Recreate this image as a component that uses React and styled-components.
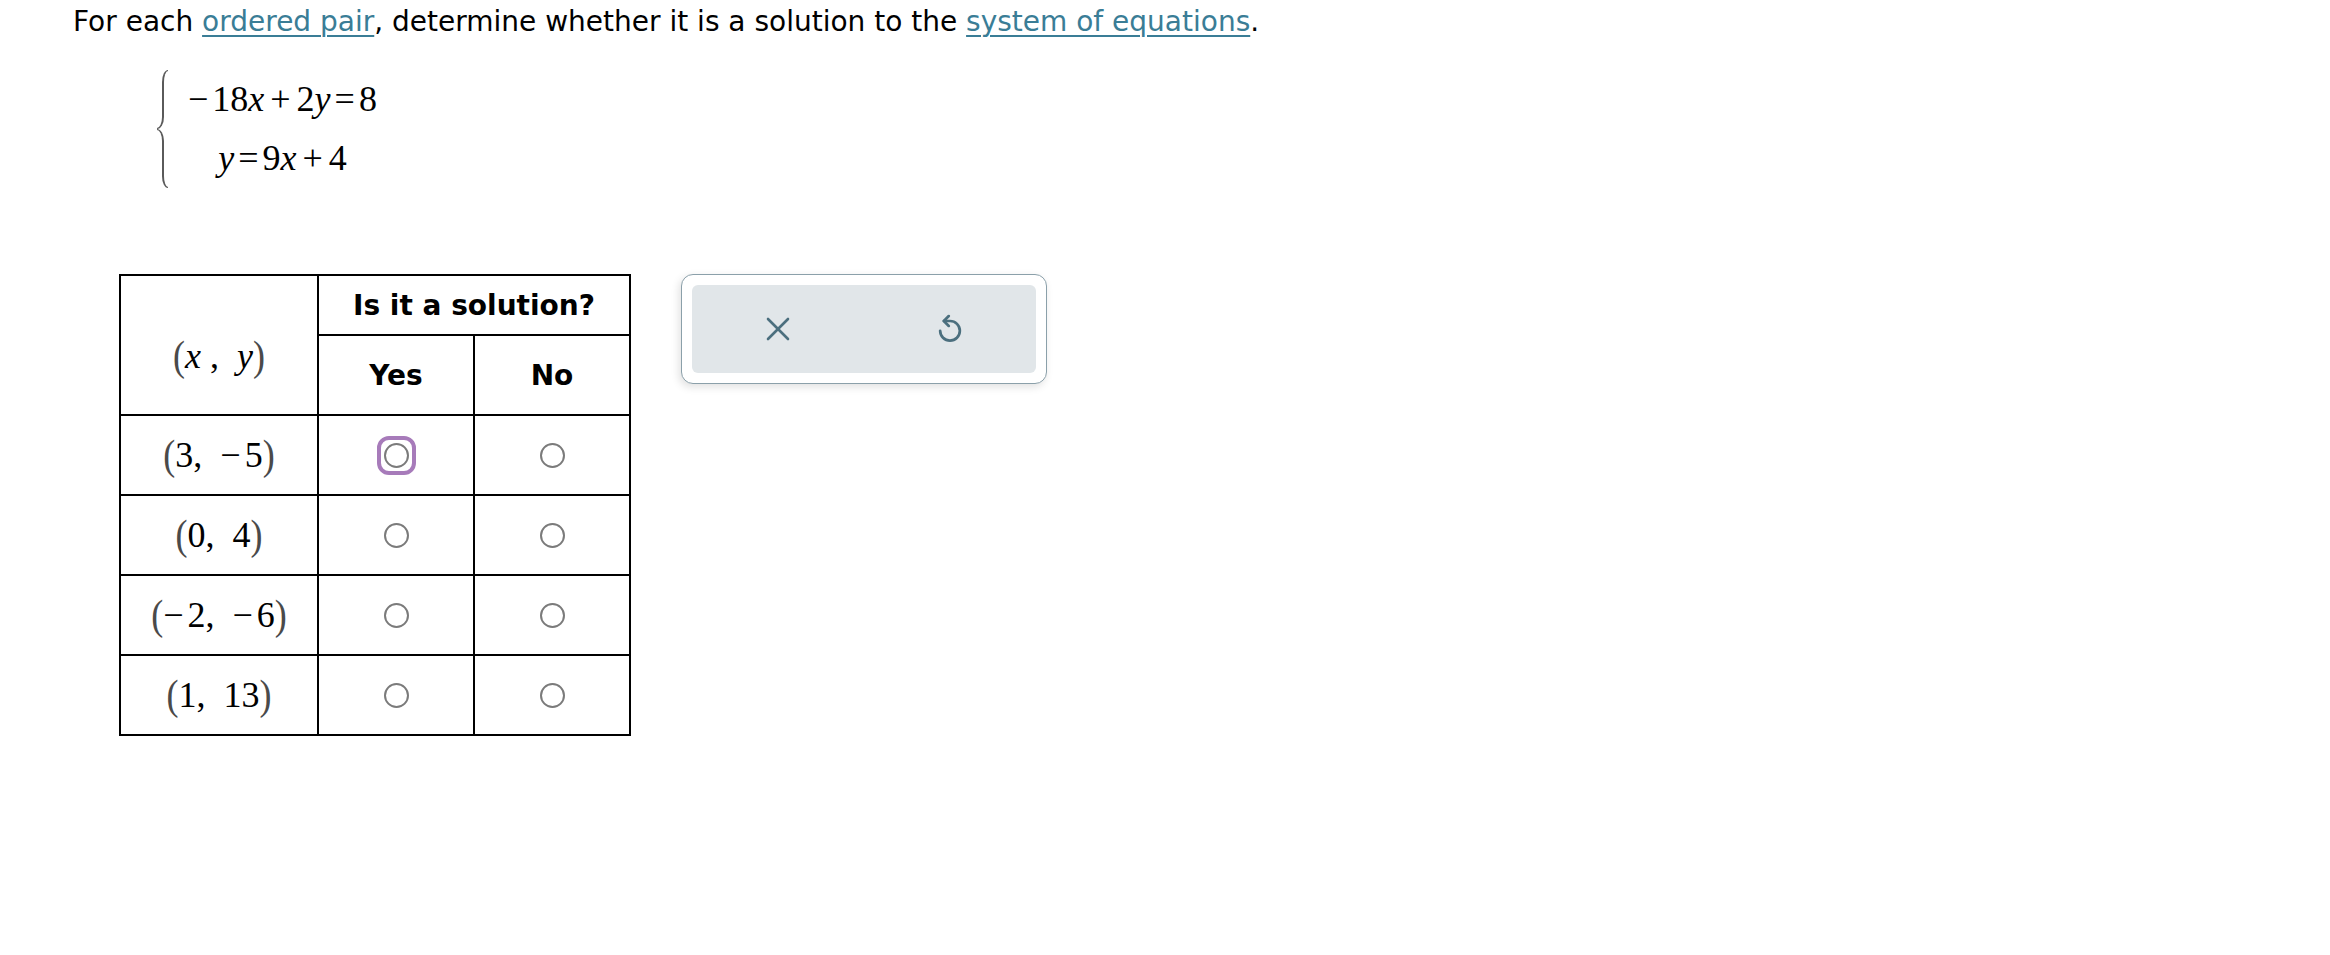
import React from "react";
import styled, { createGlobalStyle } from "styled-components";

const Global = createGlobalStyle`
  html, body {
    margin: 0;
    background: #ffffff;
  }
  body {
    font-family: "DejaVu Sans", Verdana, sans-serif;
    color: #000;
  }
`;

const Page = styled.div`
  padding: 3px 0 40px 73px;
`;

const Prompt = styled.p`
  margin: 0;
  font-size: 28px;
  line-height: 38px;
`;

const TermLink = styled.a`
  color: #3a7d96;
  text-decoration: underline;
  text-decoration-thickness: 2px;
  text-underline-offset: 4px;
  cursor: pointer;
`;

const System = styled.div`
  display: flex;
  align-items: stretch;
  gap: 20px;
  height: 118px;
  margin: 29px 0 0 84px;
`;

const Brace = styled.div`
  width: 11px;
  display: flex;
  flex-direction: column;
`;

const BracePart = styled.div`
  flex: 1;
  box-sizing: border-box;
  border-color: #5a5a5a;
  border-style: solid;
  border-width: 0;
  ${(p) =>
    p.$pos === "top" &&
    `margin-left: 5px; border-left-width: 2px; border-top-width: 1.5px; border-top-left-radius: 6px 12px;`}
  ${(p) =>
    p.$pos === "upper" &&
    `width: 7px; border-right-width: 2px; border-bottom-width: 1.5px; border-bottom-right-radius: 7px 12px;`}
  ${(p) =>
    p.$pos === "lower" &&
    `width: 7px; border-right-width: 2px; border-top-width: 1.5px; border-top-right-radius: 7px 12px;`}
  ${(p) =>
    p.$pos === "bottom" &&
    `margin-left: 5px; border-left-width: 2px; border-bottom-width: 1.5px; border-bottom-left-radius: 6px 12px;`}
`;

const Equations = styled.div`
  display: flex;
  flex-direction: column;
  align-items: center;
  font-family: "Liberation Serif", "Times New Roman", serif;
  font-size: 36px;
  line-height: 59px;
`;

const Line = styled.div`
  white-space: nowrap;
`;

const V = styled.i`
  font-style: italic;
`;

const Op = styled.span`
  margin: 0 ${(p) => p.$gap || 6}px;
`;

const Neg = styled.span`
  margin-right: 4px;
`;

const Workspace = styled.div`
  display: flex;
  align-items: flex-start;
  gap: 50px;
  margin: 86px 0 0 46px;
`;

const Grid = styled.table`
  border-collapse: collapse;
  table-layout: fixed;
`;

const Cell = styled.td`
  border: 2px solid #000;
  padding: 0;
  text-align: center;
  vertical-align: middle;
  width: ${(p) => p.$w || "auto"};
  height: ${(p) => p.$h || 78}px;
`;

const HeadCell = styled(Cell).attrs({ as: "th" })`
  font-weight: bold;
  font-size: 28px;
`;

const PairHead = styled(Cell).attrs({ as: "th" })`
  font-weight: normal;
  padding-top: 22px;
`;

const MathText = styled.span`
  font-family: "Liberation Serif", "Times New Roman", serif;
  font-size: 36px;
  white-space: nowrap;
`;

const Paren = styled.span`
  display: inline-block;
  color: #4a4a4a;
  transform: scaleY(1.2);
`;

const Radio = styled.span`
  display: inline-block;
  box-sizing: border-box;
  width: 25px;
  height: 25px;
  border: 2px solid #7b7b7b;
  border-radius: 50%;
  background: #fff;
  vertical-align: middle;
`;

const FocusRing = styled.span`
  display: inline-flex;
  padding: 3px;
  border: 4px solid #a77bba;
  border-radius: 12px;
  vertical-align: middle;
`;

const Tools = styled.div`
  box-sizing: border-box;
  width: 366px;
  height: 110px;
  padding: 10px;
  border: 1.5px solid #8ba0aa;
  border-radius: 12px;
  background: #fff;
  box-shadow: -2px 3px 8px rgba(0, 0, 0, 0.12);
`;

const ToolPanel = styled.div`
  height: 100%;
  display: grid;
  grid-template-columns: 1fr 1fr;
  background: #e1e6e9;
  border-radius: 6px;
`;

const ToolButton = styled.button`
  border: none;
  background: transparent;
  display: flex;
  align-items: center;
  justify-content: center;
  color: #4b6f7e;
  cursor: pointer;
  padding: 0;
`;

const Pair = ({ children }) => (
  <MathText>
    <Paren>(</Paren>
    {children}
    <Paren>)</Paren>
  </MathText>
);

const rows = [
  { key: "a", content: <>3,&nbsp; <Neg>−</Neg>5</>, focused: true },
  { key: "b", content: <>0,&nbsp; 4</> },
  { key: "c", content: <><Neg>−</Neg>2,&nbsp; <Neg>−</Neg>6</> },
  { key: "d", content: <>1,&nbsp; 13</> },
];

function CloseIcon() {
  return (
    <svg width="26" height="26" viewBox="0 0 26 26" fill="none" stroke="currentColor" strokeWidth="2.6" strokeLinecap="round">
      <path d="M3 3 L23 23" />
      <path d="M23 3 L3 23" />
    </svg>
  );
}

function UndoIcon() {
  return (
    <svg width="30" height="32" viewBox="0 0 24 26" fill="none" stroke="currentColor" strokeWidth="2.2" strokeLinecap="round" strokeLinejoin="round">
      <path d="M7 6.5 H12 A8 8 0 1 1 4 14.5" />
      <path d="M11 2.5 L7 6.5 L11 10.5" />
    </svg>
  );
}

export default function App() {
  return (
    <Page>
      <Global />
      <Prompt>
        For each <TermLink>ordered pair</TermLink>, determine whether it is a solution to the{" "}
        <TermLink>system of equations</TermLink>.
      </Prompt>

      <System>
        <Brace>
          <BracePart $pos="top" />
          <BracePart $pos="upper" />
          <BracePart $pos="lower" />
          <BracePart $pos="bottom" />
        </Brace>
        <Equations>
          <Line>
            <Neg>−</Neg>18<V>x</V>
            <Op>+</Op>2<V>y</V>
            <Op $gap={4}>=</Op>8
          </Line>
          <Line>
            <V>y</V>
            <Op $gap={4}>=</Op>9<V>x</V>
            <Op>+</Op>4
          </Line>
        </Equations>
      </System>

      <Workspace>
        <Grid>
          <thead>
            <tr>
              <PairHead rowSpan={2} $w="196px" $h={58}>
                <Pair>
                  <V>x</V>&nbsp;,&nbsp;&nbsp;<V>y</V>
                </Pair>
              </PairHead>
              <HeadCell colSpan={2} $h={58}>Is it a solution?</HeadCell>
            </tr>
            <tr>
              <HeadCell $w="154px" $h={78}>Yes</HeadCell>
              <HeadCell $w="154px" $h={78}>No</HeadCell>
            </tr>
          </thead>
          <tbody>
            {rows.map((r) => (
              <tr key={r.key}>
                <Cell>
                  <Pair>{r.content}</Pair>
                </Cell>
                <Cell>
                  {r.focused ? (
                    <FocusRing>
                      <Radio />
                    </FocusRing>
                  ) : (
                    <Radio />
                  )}
                </Cell>
                <Cell>
                  <Radio />
                </Cell>
              </tr>
            ))}
          </tbody>
        </Grid>

        <Tools>
          <ToolPanel>
            <ToolButton aria-label="Clear">
              <CloseIcon />
            </ToolButton>
            <ToolButton aria-label="Undo">
              <UndoIcon />
            </ToolButton>
          </ToolPanel>
        </Tools>
      </Workspace>
    </Page>
  );
}
